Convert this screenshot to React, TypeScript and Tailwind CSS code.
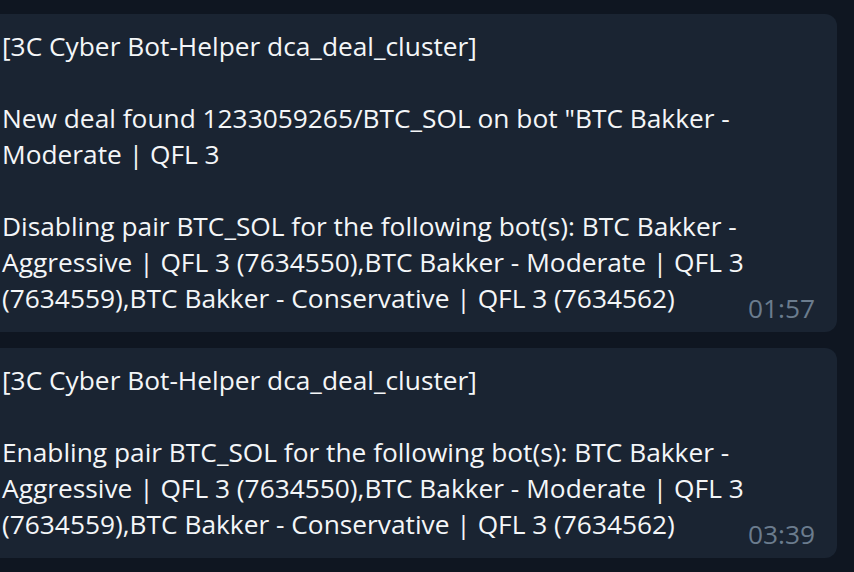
const first = [
  "[3C Cyber Bot-Helper dca_deal_cluster]",
  "",
  'New deal found 1233059265/BTC_SOL on bot "BTC Bakker -',
  "Moderate | QFL 3",
  "",
  "Disabling pair BTC_SOL for the following bot(s): BTC Bakker -",
  "Aggressive | QFL 3 (7634550),BTC Bakker - Moderate | QFL 3",
  "(7634559),BTC Bakker - Conservative | QFL 3 (7634562)",
];

const second = [
  "[3C Cyber Bot-Helper dca_deal_cluster]",
  "",
  "Enabling pair BTC_SOL for the following bot(s): BTC Bakker -",
  "Aggressive | QFL 3 (7634550),BTC Bakker - Moderate | QFL 3",
  "(7634559),BTC Bakker - Conservative | QFL 3 (7634562)",
];

export default function App() {
  return (
    <div
      className="h-[572px] w-[854px] overflow-hidden bg-[#0f1621] pt-[14px]"
      style={{ fontFamily: '"Open Sans", "Noto Sans", sans-serif' }}
    >
      <div className="flex flex-col gap-[16px]">
        <Bubble lines={first} time="01:57" />
        <Bubble lines={second} time="03:39" />
      </div>
    </div>
  );
}

function Bubble({ lines, time }: { lines: string[]; time: string }) {
  const body = lines.slice(0, -1);
  const last = lines[lines.length - 1];
  return (
    <div className="-ml-[12px] w-[849px] rounded-[12px] bg-[#1a2432] pt-[14px] pb-[16px] pl-[14px] pr-[22px] text-[26.3px] leading-[36px] text-[#f4f6f8]">
      {body.map((l, i) => (
        <div key={i} className="h-[36px] whitespace-pre">
          {l}
        </div>
      ))}
      <div className="flex items-end justify-between">
        <span className="whitespace-pre">{last}</span>
        <span className="translate-y-[10px] text-[#6b7c8e]">{time}</span>
      </div>
    </div>
  );
}
